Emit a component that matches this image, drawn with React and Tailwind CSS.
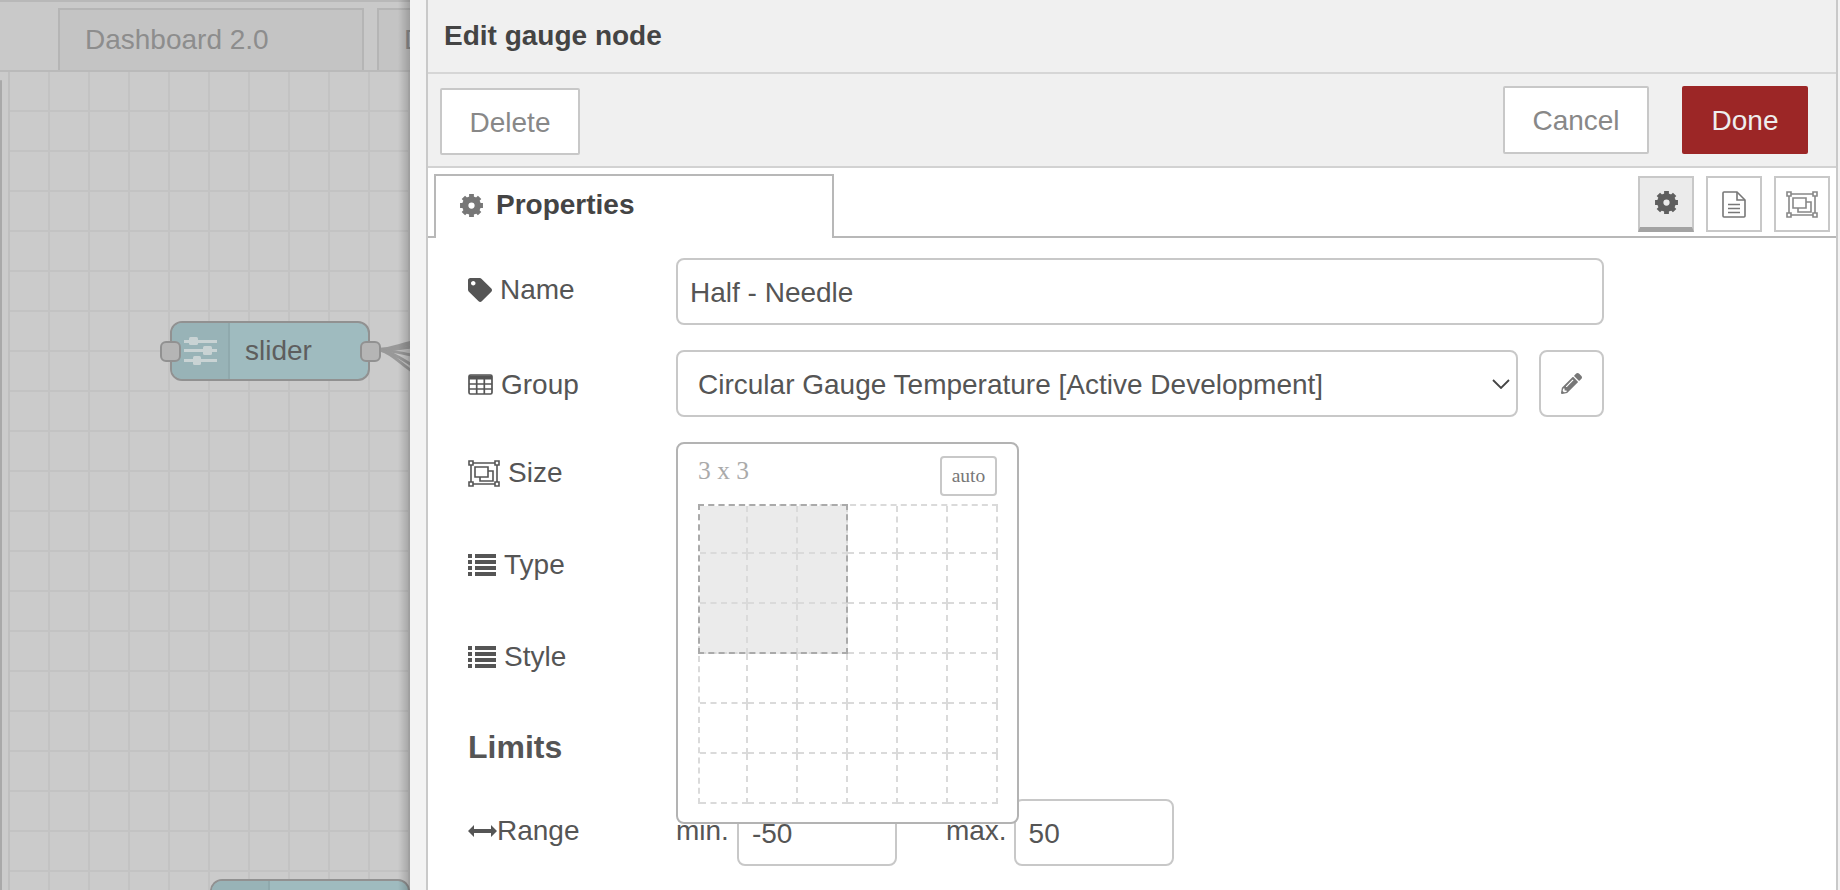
import { FaPencilAlt, FaTag } from "react-icons/fa";

const SizeIcon = ({ className }) => (
  <svg viewBox="0 0 32 27" fill="none" stroke="currentColor" strokeWidth="1.6" className={className}>
    <path d="M3 3h26v21H3z" />
    <path d="M1 1h4v4H1zM27 1h4v4h-4zM1 22h4v4H1zM27 22h4v4h-4z" fill="#fff" />
    <path d="M7 7h13v10H7z" />
    <path d="M12 17v4h13V11h-5" />
  </svg>
);

const SliderIcon = () => (
  <svg viewBox="0 0 34 28" fill="#c9d3d4" className="h-[28px] w-[34px]">
    <rect x="0" y="3" width="33" height="3" />
    <rect x="5" y="0" width="9" height="8" rx="1.5" />
    <rect x="0" y="12" width="33" height="3" />
    <rect x="19" y="9" width="9" height="9" rx="1.5" />
    <rect x="0" y="22" width="33" height="3" />
    <rect x="9" y="19" width="8" height="9" rx="1.5" />
  </svg>
);

const CogIcon = ({ className }) => (
  <svg viewBox="0 0 24 24" fill="none" stroke="currentColor" className={className}>
    <circle cx="12" cy="12" r="6" strokeWidth="6" />
    <path
      strokeWidth="4.6"
      d="M12 1v4M12 19v4M1 12h4M19 12h4M4.2 4.2l2.8 2.8M17 17l2.8 2.8M19.8 4.2L17 7M7 17l-2.8 2.8"
    />
  </svg>
);

const ListIcon = () => (
  <svg viewBox="0 0 28 22" fill="currentColor" className="h-[22px] w-[28px] shrink-0">
    <path d="M0 0h4v4H0zM7 0h21v4H7zM0 6h4v4H0zM7 6h21v4H7zM0 12h4v4H0zM7 12h21v4H7zM0 18h4v4H0zM7 18h21v4H7z" />
  </svg>
);

const TableIcon = () => (
  <svg viewBox="0 0 25 21" fill="none" stroke="currentColor" strokeWidth="1.7" className="h-[21px] w-[25px] shrink-0">
    <rect x="1" y="1" width="23" height="19" rx="1.5" />
    <path d="M1 3.5h23" strokeWidth="4" />
    <path d="M1 10h23M1 15h23M8.7 5v15M16.3 5v15" />
  </svg>
);

const ArrowsIcon = () => (
  <svg viewBox="0 0 29 14" fill="currentColor" className="h-[14px] w-[29px] shrink-0">
    <path d="M0 7l6-6v4h17V1l6 6-6 6V9H6v4z" />
  </svg>
);

const FileIcon = () => (
  <svg viewBox="0 0 24 27" fill="none" stroke="#777" strokeWidth="1.6" className="h-[27px] w-[24px]">
    <path d="M1 2a1 1 0 0 1 1-1h13l8 8v16a1 1 0 0 1-1 1H2a1 1 0 0 1-1-1z" />
    <path d="M15 1v8h8" />
    <path d="M6 13.5h12M6 17.5h12M6 21.5h12" />
  </svg>
);

function Node({ label, className, ports = false }) {
  return (
    <div className={`absolute z-10 flex h-[60px] w-[200px] rounded-[12px] border-2 border-[#919191] bg-[#9fbbbf] ${className}`}>
      <div className="flex w-[58px] items-center justify-center rounded-l-[10px] border-r-2 border-[#8fa9ad] bg-[#98b3b7] pl-[2px]">
        {ports && <SliderIcon />}
      </div>
      <span className="pl-[15px] text-[28px] leading-[56px] text-[#5e5e5e]">{label}</span>
      {ports && (
        <>
          <div className="absolute left-[-12px] top-[18px] h-[21px] w-[21px] rounded-[6px] border-2 border-[#919191] bg-[#b5b5b5]" />
          <div className="absolute right-[-13px] top-[18px] h-[21px] w-[21px] rounded-[6px] border-2 border-[#919191] bg-[#b5b5b5]" />
        </>
      )}
    </div>
  );
}

function Canvas() {
  return (
    <div className="relative flex h-full w-[410px] shrink-0 flex-col overflow-hidden bg-[#cbcbcb]">
      {/* workspace tabs */}
      <div className="flex h-[72px] shrink-0 items-end gap-[13px] border-b-2 border-t-2 border-b-[#bababa] border-t-[#b8b8b8] bg-[#c9c9c9] pl-[58px]">
        <div className="flex h-[62px] w-[306px] shrink-0 items-center border-2 border-b-0 border-[#b5b5b5] bg-[#c4c4c4] pl-[25px] text-[28px] text-[#8d8d8d]">
          Dashboard 2.0
        </div>
        <div className="flex h-[62px] w-[306px] shrink-0 items-center border-2 border-b-0 border-[#b5b5b5] bg-[#c4c4c4] pl-[25px] text-[28px] text-[#8d8d8d]">
          Dashboard
        </div>
      </div>

      {/* grid */}
      <div className="relative ml-[8px] flex-1 border-l-2 border-[#bfbfbf] bg-[linear-gradient(to_right,#c3c3c3_2px,transparent_2px),linear-gradient(to_bottom,#c3c3c3_2px,transparent_2px)] bg-[size:40px_40px] bg-[position:-2px_-2px]">
        <Node label="slider" ports className="left-[160px] top-[249px]" />
        <svg className="absolute left-[370px] top-[259px] z-0 h-[50px] w-[40px]" viewBox="0 0 40 50" fill="none" stroke="#999" strokeWidth="3">
          <path d="M0 19C15 18 20 14 32 12" strokeWidth="4.5" />
          <path d="M0 19C15 19 20 18 32 16" />
          <path d="M0 19C15 20 20 22 32 24" />
          <path d="M0 19C12 21 22 28 32 34" />
          <path d="M0 19C12 22 22 34 32 40" />
        </svg>
        <Node label="" className="left-[200px] top-[807px]" />
      </div>

      <div className="absolute bottom-0 left-0 top-[80px] w-[2px] rounded-t-[2px] bg-[#a9a9a9]" />
      {/* shadow cast by the tray */}
      <div className="absolute bottom-0 right-0 top-0 z-20 w-[12px] bg-gradient-to-r from-transparent to-black/20" />
    </div>
  );
}

function Label({ icon, children, className = "" }) {
  return (
    <div className={`flex w-[208px] shrink-0 items-center text-[#555] ${className}`}>
      {icon}
      <span>{children}</span>
    </div>
  );
}

const inputClass =
  "h-[67px] rounded-[8px] border-2 border-[#c8c8c8] bg-white text-[28px] text-[#555] outline-none";

function SizePicker() {
  const columns = ["w-[48px]", "w-[50px]", "w-[50px]", "w-[50px]", "w-[50px]", "w-[50px]"];
  const rows = ["h-[48px]", "h-[50px]", "h-[50px]", "h-[50px]", "h-[50px]", "h-[50px]"];
  return (
    <div className="absolute left-0 top-0 z-10 h-[382px] w-[343px] rounded-[8px] border-2 border-[#b3b3b3] bg-white pl-[20px]">
      <div className="flex h-[60px] w-[299px] items-start justify-between">
        <span className="pt-[12px] font-['Liberation_Serif',serif] text-[25.5px] leading-[30px] text-[#aaa]">3 x 3</span>
        <button className="mt-[12px] h-[40px] w-[57px] rounded-[4px] border-2 border-[#c8c8c8] bg-white font-['Liberation_Serif',serif] text-[19.5px] text-[#777]">
          auto
        </button>
      </div>
      <div className="relative w-[300px] border-l-2 border-t-2 border-dashed border-[#dadada]">
        {rows.map((rowHeight, r) => (
          <div key={r} className={`flex ${rowHeight}`}>
            {columns.map((columnWidth, c) => (
              <div
                key={c}
                className={`${columnWidth} border-b-2 border-r-2 border-dashed border-[#dadada] ${r < 3 && c < 3 ? "bg-[#ebebeb]" : ""}`}
              />
            ))}
          </div>
        ))}
        <div className="absolute left-[-2px] top-[-2px] h-[150px] w-[150px] border-2 border-dashed border-[#aaa]" />
      </div>
    </div>
  );
}

function Form() {
  return (
    <div className="flex flex-col pl-[40px] pt-[20px] text-[28px]">
      <div className="flex h-[67px] items-center">
        <Label icon={<FaTag className="mr-[8px] h-[24px] w-[24px]" />} className="-translate-y-[2px]">Name</Label>
        <input readOnly defaultValue="Half - Needle" className={`${inputClass} w-[928px] px-[12px] pt-[2px]`} />
      </div>

      <div className="mt-[25px] flex h-[67px] items-center">
        <Label icon={<TableIcon />} className="translate-y-[1px] gap-[8px]">Group</Label>
        <div className={`${inputClass} flex w-[842px] items-center justify-between pl-[20px] pr-[6px]`}>
          <span className="pt-[3px]">Circular Gauge Temperature [Active Development]</span>
          <svg viewBox="0 0 18 10" fill="none" stroke="#444" strokeWidth="1.8" className="h-[10px] w-[18px]">
            <path d="M1 1l8 8 8-8" />
          </svg>
        </div>
        <button className="ml-[21px] flex h-[67px] w-[65px] items-center justify-center rounded-[8px] border-2 border-[#c8c8c8] bg-white">
          <FaPencilAlt className="h-[21px] w-[21px] text-[#777]" />
        </button>
      </div>

      <div className="relative mt-[25px] flex h-[60px] items-center">
        <Label icon={<SizeIcon className="mr-[8px] h-[27px] w-[32px] text-[#555]" />} className="translate-y-[1px]">Size</Label>
        <div className="absolute left-[208px] top-0"><SizePicker /></div>
      </div>

      <div className="mt-[29px] flex h-[67px] items-center">
        <Label icon={<ListIcon />} className="gap-[8px]">Type</Label>
      </div>

      <div className="mt-[25px] flex h-[67px] items-center">
        <Label icon={<ListIcon />} className="gap-[8px]">Style</Label>
      </div>

      <h3 className="mt-[34px] flex h-[46px] items-center text-[32px] font-bold text-[#555]">Limits</h3>

      <div className="mt-[29px] flex h-[67px] items-center">
        <Label icon={<ArrowsIcon />} className="-translate-y-[2px]">Range</Label>
        <span className="-translate-y-[2px] text-[#555]">min.</span>
        <input readOnly defaultValue="-50" className={`${inputClass} ml-[8px] w-[160px] px-[13px] pt-[2px]`} />
        <span className="ml-[49px] -translate-y-[2px] text-[#555]">max.</span>
        <input readOnly defaultValue="50" className={`${inputClass} ml-[7px] w-[160px] px-[13px] pt-[2px]`} />
      </div>
    </div>
  );
}

function Tray() {
  return (
    <div className="flex h-full flex-1 bg-[#f3f3f3] pl-[16px] pr-[2px]">
      <div className="flex h-full flex-1 flex-col overflow-hidden border-x-2 border-[#c9c9c9] bg-white">
        <div className="flex h-[74px] shrink-0 items-center border-b-2 border-[#d6d6d6] bg-[#f0f0f0] pl-[16px] text-[28px] font-bold text-[#444]">
          Edit gauge node
        </div>
        <div className="flex h-[94px] shrink-0 items-start justify-between border-b-2 border-[#d2d2d2] bg-[#f0f0f0] pl-[12px] pr-[28px] pt-[12px] text-[28px]">
          <button className="mt-[2px] h-[67px] w-[140px] rounded-[2px] border-2 border-[#c8c8c8] bg-white pt-[2px] text-[#888]">Delete</button>
          <div className="flex gap-[33px]">
            <button className="h-[68px] w-[146px] rounded-[2px] border-2 border-[#c8c8c8] bg-white pt-[2px] text-[#888]">Cancel</button>
            <button className="h-[68px] w-[126px] rounded-[2px] bg-[#9c2626] pt-[2px] text-[#eee]">Done</button>
          </div>
        </div>

        <div className="flex h-[70px] shrink-0 items-start justify-between border-b-2 border-[#b8b8b8] pl-[6px] pr-[6px]">
          <div className="relative z-10 mt-[6px] flex h-[64px] w-[400px] items-center gap-[12px] border-2 border-b-0 border-[#b8b8b8] bg-white pb-[4px] pl-[23px] text-[28px] font-bold text-[#444]">
            <CogIcon className="h-[25px] w-[25px] text-[#777]" />
            Properties
          </div>
          <div className="mt-[8px] flex gap-[12px]">
            <div className="flex h-[56px] w-[56px] items-center justify-center border-2 border-b-[5px] border-[#c8c8c8] border-b-[#a3a3a3] bg-[#ebebeb]">
              <CogIcon className="h-[25px] w-[25px] text-[#5f5f5f]" />
            </div>
            <div className="flex h-[56px] w-[56px] items-center justify-center border-2 border-[#c8c8c8]">
              <FileIcon />
            </div>
            <div className="flex h-[56px] w-[56px] items-center justify-center border-2 border-[#c8c8c8]">
              <SizeIcon className="h-[27px] w-[32px] text-[#888]" />
            </div>
          </div>
        </div>

        <Form />
      </div>
    </div>
  );
}

export default function App() {
  return (
    <div className="flex h-[890px] w-[1840px] overflow-hidden bg-white font-['Liberation_Sans',Arial,sans-serif]">
      <Canvas />
      <Tray />
    </div>
  );
}
